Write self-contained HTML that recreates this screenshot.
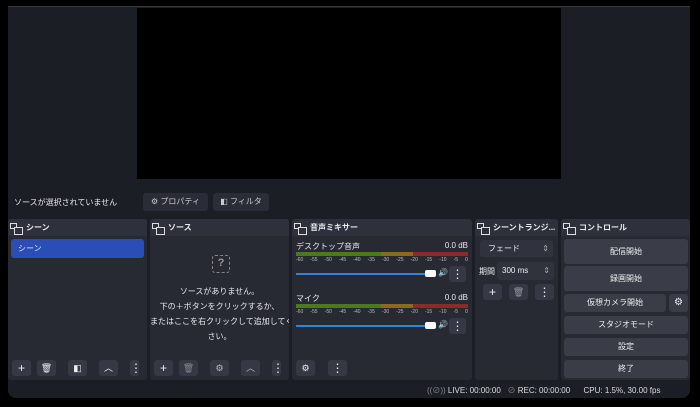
<!DOCTYPE html>
<html><head><meta charset="utf-8"><style>
*{box-sizing:border-box;margin:0;padding:0}
body{width:700px;height:407px;background:#000;position:relative;overflow:hidden;font-family:"Liberation Sans","Noto Sans CJK JP",sans-serif;color:#e8e8ec;font-size:8px}
.a{position:absolute}
#win{left:8px;top:6px;width:682px;height:392px;background:#1c1e26;border-radius:0 0 8px 8px;border-top:1px solid #3a3c44}
.dock{position:absolute;top:219px;height:161px;background:#272a33;border-radius:3px}
.hd{position:absolute;left:0;top:0;right:0;height:17px;background:#2e313c;border-radius:3px 3px 0 0;font-weight:bold;font-size:8px;line-height:17px;padding-left:18px}
.hd i{position:absolute;left:2px;top:4px;width:7px;height:6px;border:1px solid #ddd}
.hd i:after{content:"";position:absolute;left:3px;top:3px;width:7px;height:6px;border:1px solid #ddd;background:#2e313c}
.btn{position:absolute;background:#3a3d48;border-radius:3px;text-align:center;color:#eee}
.dk{background:#1e2028}
.tb{position:absolute;width:19px;height:16px;border-radius:3px;background:#363945;color:#eee;text-align:center;line-height:16px;font-size:12px}
.cb{font-size:8px}
.sc{position:absolute;left:4px;width:172px;display:flex;justify-content:space-between;font-size:5px;color:#bbb}
</style></head><body>
<div id="win" class="a"></div>
<div class="a" style="left:137px;top:8px;width:424px;height:171px;background:#000"></div>

<div class="a" style="left:14px;top:197px;font-size:8px">ソースが選択されていません</div>
<div class="btn" style="left:143px;top:193px;width:65px;height:18px;line-height:18px;background:#2a2d37;font-size:8px;color:#ccc">⚙ プロパティ</div>
<div class="btn" style="left:213px;top:193px;width:56px;height:18px;line-height:18px;background:#2a2d37;font-size:8px;color:#ccc">◧ フィルタ</div>

<!-- scenes -->
<div class="dock" style="left:8px;width:139px">
<div class="hd"><i></i>シーン</div>
<div class="a" style="left:3px;top:20px;width:133px;height:19px;background:#2a4db8;border-radius:3px;line-height:19px;padding-left:7px;font-size:8px">シーン</div>
<div class="tb" style="left:4px;top:141px">+</div>
<div class="tb" style="left:29px;top:141px;font-size:9px">🗑</div>
<div class="tb" style="left:60px;top:141px;font-size:9px">◧</div>
<div class="tb" style="left:91px;top:141px;font-size:9px">︿</div>
<div class="tb" style="left:122px;top:141px;width:9px">⋮</div>
</div>

<!-- sources -->
<div class="dock" style="left:150px;width:139px">
<div class="hd"><i></i>ソース</div>
<div class="a" style="left:62px;top:36px;width:18px;height:18px;border:1.5px dashed #888;border-radius:3px;color:#999;text-align:center;line-height:15px;font-size:11px;font-weight:bold">?</div>
<div class="a" style="left:0;top:65px;width:139px;text-align:center;font-size:8px;line-height:15px;white-space:nowrap;overflow:hidden">ソースがありません。<br>下の＋ボタンをクリックするか、<br>またはここを右クリックして追加してく<br>さい。</div>
<div class="tb" style="left:4px;top:141px">+</div>
<div class="tb dk" style="left:29px;top:141px;font-size:9px;color:#888">🗑</div>
<div class="tb dk" style="left:60px;top:141px;font-size:9px;color:#bbb">⚙</div>
<div class="tb dk" style="left:91px;top:141px;font-size:9px;color:#bbb">︿</div>
<div class="tb" style="left:122px;top:141px;width:9px">⋮</div>
</div>

<!-- mixer -->
<div class="dock" style="left:292px;width:180px">
<div class="hd"><i></i>音声ミキサー</div>
<div class="a" style="left:4px;top:22px;font-size:8px">デスクトップ音声</div>
<div class="a" style="right:4px;top:22px;font-size:8px">0.0 dB</div>
<div class="a" style="left:4px;top:33px;width:85px;height:4px;background:#4a7a1c"></div>
<div class="a" style="left:89px;top:33px;width:32px;height:4px;background:#8a6a1c"></div>
<div class="a" style="left:121px;top:33px;width:55px;height:4px;background:#8a2a2a"></div>
<div class="sc" style="top:38px"><span>-60</span><span>-55</span><span>-50</span><span>-45</span><span>-40</span><span>-35</span><span>-30</span><span>-25</span><span>-20</span><span>-15</span><span>-10</span><span>-5</span><span>0</span></div>
<div class="a" style="left:4px;top:54px;width:134px;height:2px;background:#2f86d8"></div>
<div class="a" style="left:133px;top:51px;width:11px;height:7px;background:#fff;border-radius:2px"></div>
<div class="a" style="left:146px;top:49px;font-size:8px">🔊</div>
<div class="tb" style="left:157px;top:47px;width:17px">⋮</div>
<div class="a" style="left:4px;top:74px;font-size:8px">マイク</div>
<div class="a" style="right:4px;top:74px;font-size:8px">0.0 dB</div>
<div class="a" style="left:4px;top:85px;width:85px;height:4px;background:#4a7a1c"></div>
<div class="a" style="left:89px;top:85px;width:32px;height:4px;background:#8a6a1c"></div>
<div class="a" style="left:121px;top:85px;width:55px;height:4px;background:#8a2a2a"></div>
<div class="sc" style="top:90px"><span>-60</span><span>-55</span><span>-50</span><span>-45</span><span>-40</span><span>-35</span><span>-30</span><span>-25</span><span>-20</span><span>-15</span><span>-10</span><span>-5</span><span>0</span></div>
<div class="a" style="left:4px;top:106px;width:134px;height:2px;background:#2f86d8"></div>
<div class="a" style="left:133px;top:103px;width:11px;height:7px;background:#fff;border-radius:2px"></div>
<div class="a" style="left:146px;top:101px;font-size:8px">🔊</div>
<div class="tb" style="left:157px;top:99px;width:17px">⋮</div>
<div class="tb" style="left:4px;top:141px;font-size:9px">⚙</div>
<div class="tb" style="left:36px;top:141px">⋮</div>
</div>

<!-- transitions -->
<div class="dock" style="left:475px;width:83px">
<div class="hd" style="white-space:nowrap;overflow:hidden"><i></i>シーントランジ...</div>
<div class="btn" style="left:5px;top:21px;width:73px;height:17px;line-height:17px;text-align:left;padding-left:8px;background:#30333e;font-size:8px">フェード<span class="a" style="right:4px;top:0;color:#aaa">⇕</span></div>
<div class="a" style="left:4px;top:47px;font-size:8px">期間</div>
<div class="btn" style="left:22px;top:43px;width:57px;height:18px;line-height:18px;text-align:left;padding-left:5px;background:#30333e;font-size:8px">300 ms<span class="a" style="right:4px;top:0;color:#aaa">⇕</span></div>
<div class="tb" style="left:8px;top:65px">+</div>
<div class="tb dk" style="left:34px;top:65px;font-size:9px;color:#999">🗑</div>
<div class="tb dk" style="left:60px;top:65px">⋮</div>
</div>

<!-- controls -->
<div class="dock" style="left:561px;width:129px">
<div class="hd"><i></i>コントロール</div>
<div class="btn cb" style="left:3px;top:20px;width:124px;height:25px;line-height:25px">配信開始</div>
<div class="btn cb" style="left:3px;top:47px;width:124px;height:25px;line-height:25px">録画開始</div>
<div class="btn cb" style="left:3px;top:75px;width:102px;height:18px;line-height:18px">仮想カメラ開始</div>
<div class="btn" style="left:108px;top:75px;width:19px;height:18px;line-height:18px;font-size:10px">⚙</div>
<div class="btn cb" style="left:3px;top:97px;width:124px;height:18px;line-height:18px">スタジオモード</div>
<div class="btn cb" style="left:3px;top:119px;width:124px;height:18px;line-height:18px">設定</div>
<div class="btn cb" style="left:3px;top:141px;width:124px;height:18px;line-height:18px">終了</div>
</div>

<div class="a" style="left:427px;top:385px;font-size:8px;color:#ddd;white-space:nowrap"><span style="color:#888">((⊘))</span> LIVE: 00:00:00 &nbsp; <span style="color:#888">⊘</span> REC: 00:00:00 &nbsp;&nbsp;&nbsp;&nbsp; CPU: 1.5%, 30.00 fps</div>
</body></html>
